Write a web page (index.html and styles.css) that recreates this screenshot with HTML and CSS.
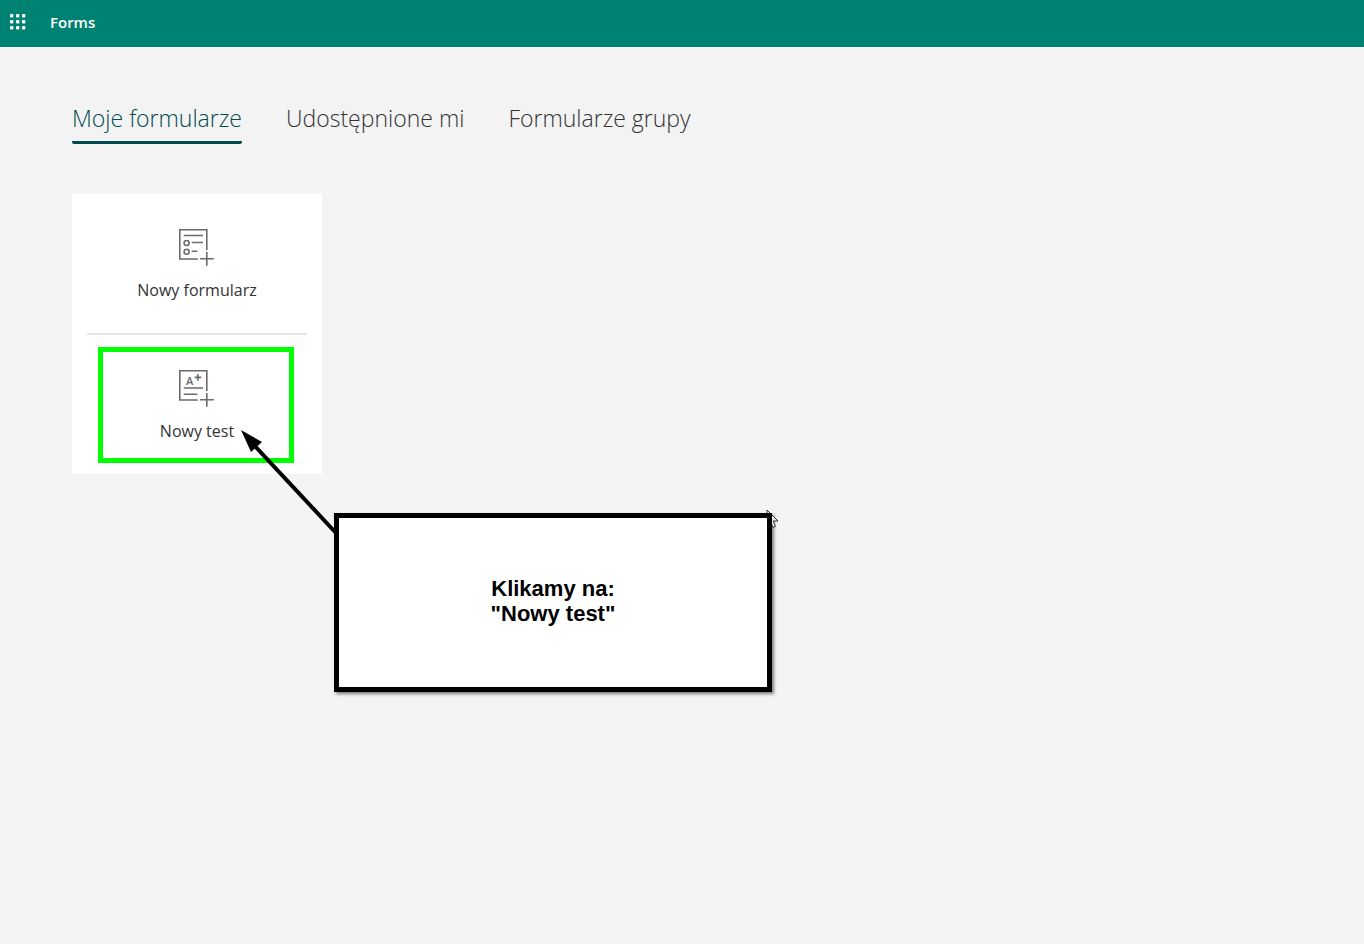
FILE: index.html
```html
<!DOCTYPE html>
<html lang="pl">
<head>
<meta charset="utf-8">
<title>Forms</title>
<link rel="stylesheet" href="styles.css">
</head>
<body>
<header class="topbar">
  <button class="launcher" type="button" aria-label="Aplikacje">
    <svg width="16" height="16" viewBox="0 0 16 16" fill="currentColor" aria-hidden="true">
      <rect x="0" y="0" width="3.4" height="3.4" rx="1"/><rect x="6" y="0" width="3.4" height="3.4" rx="1"/><rect x="12" y="0" width="3.400" height="3.4" rx="1"/>
      <rect x="0" y="6" width="3.4" height="3.4" rx="1"/><rect x="6" y="6" width="3.4" height="3.4" rx="1"/><rect x="12" y="6" width="3.4" height="3.4" rx="1"/>
      <rect x="0" y="12" width="3.4" height="3.4" rx="1"/><rect x="6" y="12" width="3.4" height="3.4" rx="1"/><rect x="12" y="12" width="3.4" height="3.4" rx="1"/>
    </svg>
  </button>
  <a class="brand" href="#">Forms</a>
</header>
<main class="content">
  <nav class="tabs">
    <button class="tab tab-active" type="button">Moje formularze</button>
    <button class="tab" type="button">Udostępnione mi</button>
    <button class="tab" type="button">Formularze grupy</button>
  </nav>
  <section class="card">
    <button class="create" type="button">
      <svg class="icon" width="38" height="38" viewBox="0 0 38 38" aria-hidden="true">
        <path d="M28.8 22V1.8H1.8V31H19.8M22 30.8H35.8M28.8 24V37.8M5.7 7.5H25M13.7 14.5H25M13.7 23.3H19.4"/>
        <circle cx="8.6" cy="15" r="2.5"/><circle cx="8.6" cy="23.8" r="2.5"/>
      </svg>
      <span>Nowy formularz</span>
    </button>
    <hr class="divider">
    <button class="create" type="button">
      <svg class="icon" width="38" height="38" viewBox="0 0 38 38" aria-hidden="true">
        <path d="M28.8 22V1.8H1.8V31H19.8M22 30.8H35.8M28.8 24V37.8M5.7 19H25M5.7 25.3H19.4M16.6 8.4H23.2M19.9 5.1V11.7"/>
        <text class="grade" x="8" y="16">A</text>
      </svg>
      <span>Nowy test</span>
    </button>
    <div class="highlight"></div>
  </section>
  <svg class="arrow" width="100" height="108" viewBox="0 0 100 108" aria-hidden="true">
    <path d="M14 15L96 103" fill="none" stroke="#000" stroke-width="4"/>
    <path d="M1 0L22 12L11 22Z"/>
  </svg>
  <svg class="cursor" width="14" height="21" viewBox="0 0 14 21" aria-hidden="true">
    <path d="M1 1V16L4.500 12.500L7 18.500L9.500 17.500L7.200 12H12Z"/>
  </svg>
  <aside class="callout">
    <p class="callout-text">Klikamy na:<br>"Nowy test"</p>
  </aside>
</main>
</body>
</html>
```
FILE: styles.css
```css
* {
  box-sizing: border-box;
}

body {
  margin: 0;
  min-height: 100vh;
  background: #f4f4f4;
  color: #333;
  font-family: "Open Sans", "Noto Sans", sans-serif;
}

button {
  border: 0;
  padding: 0;
  background: none;
  color: inherit;
  font: inherit;
  cursor: pointer;
}

.topbar {
  display: flex;
  align-items: center;
  gap: 24px;
  height: 47px;
  padding: 0 10px 3px;
  background: #008272;
  color: #fff;
}

.launcher {
  display: flex;
}

.brand {
  color: inherit;
  font-size: 15px;
  font-weight: 600;
  line-height: 20px;
  text-decoration: none;
}

.content {
  position: relative;
  padding: 54px 72px;
}

.tabs {
  display: flex;
  gap: 44px;
}

.tab {
  height: 43px;
  padding-bottom: 5px;
  border-bottom: 3px solid transparent;
  background-color: #f3f3f3;
  background-clip: padding-box;
  font-size: 23px;
  font-weight: 300;
  line-height: 35px;
  white-space: nowrap;
}

.tab-active {
  border-color: #004b50;
  border-radius: 2px;
  color: #004b50;
}

.card {
  position: relative;
  width: 250px;
  margin-top: 50px;
  background: #fff;
}

.create {
  display: flex;
  flex-direction: column;
  align-items: center;
  gap: 12px;
  width: 100%;
  height: 139px;
  padding-top: 34px;
  font-size: 16px;
  line-height: 24px;
}

.icon {
  fill: none;
  stroke: #6b6b6b;
  stroke-width: 1.6;
}

.grade {
  fill: #6b6b6b;
  stroke: none;
  font-family: "Open Sans", sans-serif;
  font-size: 11px;
  font-weight: 600;
}

.divider {
  height: 2px;
  margin: 0 15px;
  border: 0;
  background: #e6e6e6;
}

.highlight {
  position: absolute;
  top: 153px;
  left: 26px;
  width: 196px;
  height: 116px;
  border: 5px solid #0f0;
  pointer-events: none;
}

.arrow {
  position: absolute;
  top: 383px;
  left: 240px;
}

.cursor {
  position: absolute;
  z-index: 1;
  top: 462px;
  left: 766px;
  fill: #e8e8e8;
  stroke: #333;
  clip-path: polygon(0 0, 100% 0, 100% 100%, 6px 100%, 6px 4px, 0 4px);
}

.callout {
  position: absolute;
  top: 466px;
  left: 334px;
  display: flex;
  align-items: center;
  justify-content: center;
  width: 438px;
  height: 179px;
  padding-bottom: 4px;
  border: 5px solid #000;
  background: #fff;
  box-shadow: 2px 2px 3px rgba(0, 0, 0, 0.5);
}

.callout-text {
  margin: 0;
  color: #000;
  font-family: "Liberation Sans", Arial, sans-serif;
  font-size: 22px;
  font-weight: 700;
  line-height: 25px;
  text-align: center;
}
```
